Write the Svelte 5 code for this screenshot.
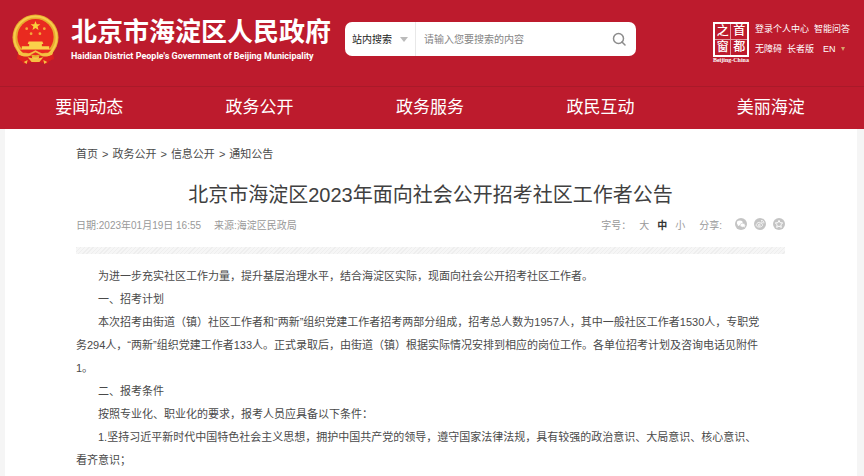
<script lang="ts">
  const nav = ['要闻动态', '政务公开', '政务服务', '政民互动', '美丽海淀'];
  const crumbs = ['首页', '政务公开', '信息公开', '通知公告'];
  const sizes = ['大', '中', '小'];

  let size = $state('中');
  let keyword = $state('');
</script>

<div class="page" lang="zh-CN">
  <header>
    <div class="top">
      <a class="brand" href="/">
        <svg class="emblem" viewBox="0 0 48 52" aria-hidden="true">
          <path d="M7 34 L5 46 L10 48 L12 51 L20 49 L24 50 L28 49 L36 51 L38 48 L43 46 L41 34 Z" fill="#d81e1f" />
          <circle cx="24" cy="24" r="23.5" fill="#e9ab2e" />
          <circle cx="24" cy="24" r="21.5" fill="none" stroke="#f6cd4c" stroke-width="2" />
          <circle cx="24" cy="23.5" r="18.5" fill="#e92a20" />
          <path d="M24 7l1.3 3.4 3.7.1-2.9 2.3 1 3.5-3.1-2-3.1 2 1-3.5-2.9-2.3 3.7-.1z" fill="#f9cf3d" />
          <g fill="#f4a93a">
            <circle cx="15" cy="15" r="1.4" />
            <circle cx="33" cy="15" r="1.4" />
            <circle cx="19.5" cy="20" r="1.4" />
            <circle cx="28.5" cy="20" r="1.4" />
          </g>
          <path d="M17 28h14l1 2.500h-1.500V33H38v3.500H10V33h7.500v-2.500H16z" fill="#fad04a" />
          <path d="M8 36.500h32l-3 3H11z" fill="#e92a20" />
          <path d="M5 36c5 5 11 5 15 3l4-2 4 2c4 2 10 2 15-3l-2 6c-5 2-9 2-13-1l-4-2-4 2c-4 3-8 3-13 1z" fill="#f5c043" />
          <path d="M6 41c5 3 10 3 14 1l1 5-8 3-5-3zM42 41c-5 3-10 3-14 1l-1 5 8 3 5-3z" fill="#dc211f" />
          <path d="M16 44l8 2 8-2-4 5h-8zM12 49l4-2-1 4zM36 49l-4-2 1 4z" fill="#f5c043" />
        </svg>
        <span class="brand-text">
          <span class="brand-cn">北京市海淀区人民政府</span>
          <span class="brand-en">Haidian District People's Government of Beijing Municipality</span>
        </span>
      </a>

      <form class="search" onsubmit={(e) => e.preventDefault()}>
        <div class="scope">
          <select aria-label="搜索范围">
            <option>站内搜索</option>
          </select>
          <span class="caret"></span>
        </div>
        <input type="text" aria-label="搜索" placeholder="请输入您要搜索的内容" bind:value={keyword} />
        <button type="submit" aria-label="搜索">
          <svg viewBox="0 0 14 14" width="14" height="14" fill="none" stroke="#8c8c8c" stroke-width="1.5">
            <circle cx="6.5" cy="6.5" r="5" />
            <path d="M10 10l3 3" stroke-linecap="round" />
          </svg>
        </button>
      </form>

      <div class="tools">
        <a class="seal" href="/capital">
          <span class="seal-box">
            <span>之</span><span>首</span><span>窗</span><span>都</span>
          </span>
          <span class="seal-name">Beijing-China</span>
        </a>
        <div class="links">
          <div class="row">
            <a href="/login">登录个人中心</a>
            <a href="/ask">智能问答</a>
          </div>
          <div class="row">
            <a href="/access">无障碍</a>
            <a href="/elder">长者版</a>
            <a class="lang" href="/en">EN <i></i></a>
          </div>
        </div>
      </div>
    </div>

    <nav>
      {#each nav as item}
        <a href="/{item}">{item}</a>
      {/each}
    </nav>
  </header>

  <main>
    <div class="crumbs">
      {#each crumbs as crumb, i}
        {#if i > 0}<span>&gt;</span>{/if}
        <a href="/{crumb}">{crumb}</a>
      {/each}
    </div>

    <h1>北京市海淀区2023年面向社会公开招考社区工作者公告</h1>

    <div class="meta">
      <span>日期:2023年01月19日 16:55</span>
      <span class="source">来源:海淀区民政局</span>
      <span class="label">字号：</span>
      <span class="sizes">
        {#each sizes as s}
          <button type="button" class:active={s === size} onclick={() => (size = s)}>{s}</button>
        {/each}
      </span>
      <span>分享:</span>
      <span class="share">
        <a href="/share/wechat" aria-label="微信">
          <svg viewBox="0 0 12 12" width="12" height="12">
            <circle cx="6" cy="6" r="6" fill="#c4c4c4" />
            <ellipse cx="4.8" cy="4.9" rx="2.9" ry="2.3" fill="#fff" />
            <path d="M3 6.5l-.3 1.7 1.7-1z" fill="#fff" />
            <ellipse cx="7.7" cy="7.2" rx="2.5" ry="2" fill="#fff" stroke="#c4c4c4" stroke-width=".5" />
            <path d="M8.5 8.8l1.3.8-.2-1.5z" fill="#fff" />
          </svg>
        </a>
        <a href="/share/weibo" aria-label="微博">
          <svg viewBox="0 0 12 12" width="12" height="12" fill="none" stroke="#fff">
            <circle cx="6" cy="6" r="6" fill="#c4c4c4" stroke="none" />
            <path d="M5.2 4.2C3.5 4.5 2 6 2.2 7.4c.4 2.2 5.5 2.2 6.400 0 .3-.9-.3-1.400-1-1.500.3-1-.6-1.200-1.700-.7 0-.6-.1-1-.7-1z" stroke-width=".8" />
            <circle cx="5.2" cy="7.2" r="1" stroke-width=".8" />
            <path d="M7 2.500c1.800-.3 3.200 1 2.800 2.900M7.100 3.900c.9-.1 1.500.5 1.300 1.300" stroke-width=".8" />
          </svg>
        </a>
        <a href="/share/qzone" aria-label="QQ空间">
          <svg viewBox="0 0 12 12" width="12" height="12">
            <circle cx="6" cy="6" r="6" fill="#c4c4c4" />
            <path d="M6 2.300l1.100 2.400 2.600.3-1.900 1.800.5 2.600L6 8.100 3.700 9.400l.5-2.600L2.300 5l2.600-.3z" fill="none" stroke="#fff" stroke-width="1" stroke-linejoin="round" />
          </svg>
        </a>
      </span>
    </div>

    <div class="stripe"></div>

    <article>
      <p>为进一步充实社区工作力量，提升基层治理水平，结合海淀区实际，现面向社会公开招考社区工作者。</p>
      <p>一、招考计划</p>
      <p>
        本次招考由街道（镇）社区工作者和“两新”组织党建工作者招考两部分组成，招考总人数为1957人，其中一般社区工作者1530人，专职党<br
        />务294人，“两新”组织党建工作者133人。正式录取后，由街道（镇）根据实际情况安排到相应的岗位工作。各单位招考计划及咨询电话见附件<br
        />1。
      </p>
      <p>二、报考条件</p>
      <p>按照专业化、职业化的要求，报考人员应具备以下条件：</p>
      <p>
        1.坚持习近平新时代中国特色社会主义思想，拥护中国共产党的领导，遵守国家法律法规，具有较强的政治意识、大局意识、核心意识、<br
        />看齐意识；
      </p>
    </article>
  </main>
</div>

<style>
  :global(body) {
    background: #f5f5f5;
  }

  .page {
    font-family: 'Liberation Sans', 'Noto Sans CJK SC', sans-serif;
    font-size: 11px;
    color: #4a4a4a;
  }

  a {
    color: inherit;
    text-decoration: none;
  }

  header {
    background: #bd1b2d;
    color: #fff;
  }

  .top {
    display: flex;
    align-items: flex-start;
    height: 86px;
    padding: 0 14px 0 12px;
    box-sizing: border-box;
  }

  .brand {
    display: flex;
    gap: 12px;
    margin-top: 14px;
  }

  .emblem {
    width: 47px;
    height: 51px;
  }

  .brand-text {
    display: flex;
    flex-direction: column;
    width: 264px;
    white-space: nowrap;
  }

  .brand-cn {
    font-size: 26px;
    line-height: 36px;
    font-weight: bold;
  }

  .brand-en {
    font-family: Roboto, sans-serif;
    font-size: 9px;
    line-height: 12px;
    font-weight: bold;
  }

  .search {
    display: flex;
    flex: 0 1 291px;
    height: 34px;
    margin: 22px 0 0 10px;
    background: #fff;
    border-radius: 7px;
    overflow: hidden;
  }

  .scope {
    display: flex;
    align-items: center;
    width: 71px;
    padding-left: 7px;
    box-sizing: border-box;
    border-right: 1px solid #e8e8e8;
  }

  select {
    appearance: none;
    width: 48px;
    padding: 0;
    border: 0;
    background: none;
    font: 10px 'Liberation Sans', 'Noto Sans CJK SC', sans-serif;
    color: #222;
  }

  .caret {
    border: 4px solid transparent;
    border-top: 5px solid #bbb;
    border-bottom: 0;
  }

  .search input {
    flex: 1;
    min-width: 0;
    padding: 0 8px;
    border: 0;
    outline: 0;
    background: none;
    font: 10px 'Liberation Sans', 'Noto Sans CJK SC', sans-serif;
  }

  .search input::placeholder {
    color: #858585;
  }

  .search button {
    display: flex;
    align-items: center;
    padding: 0 10px;
    border: 0;
    background: none;
  }

  .tools {
    display: flex;
    gap: 6px;
    margin: 22px 0 0 auto;
  }

  .seal {
    display: flex;
    flex-direction: column;
    align-items: center;
    font-family: 'Liberation Serif', 'Noto Sans CJK SC', serif;
  }

  .seal-box {
    display: grid;
    grid-template-columns: 1fr 1fr;
    gap: 1px;
    width: 36px;
    height: 35px;
    box-sizing: border-box;
    border: 2px solid #fff;
    background: #e59aa2;
  }

  .seal-box span {
    background: #bd1b2d;
    font-size: 12px;
    line-height: 15px;
    font-weight: 500;
    text-align: center;
  }

  .seal-name {
    font-size: 6px;
    line-height: 7px;
    font-weight: bold;
  }

  .links {
    font-size: 9px;
    line-height: 14px;
    white-space: nowrap;
  }

  .row {
    display: flex;
    gap: 5px;
    margin-bottom: 6px;
  }

  .lang {
    display: flex;
    align-items: center;
    gap: 5px;
    margin-left: 4px;
  }

  .lang i {
    border: 2px solid transparent;
    border-top: 4px solid #d7a268;
    border-bottom: 0;
  }

  nav {
    display: grid;
    grid-template-columns: repeat(5, 1fr);
    padding: 0 8px 0 4px;
    border-top: 1px solid #a91a29;
  }

  nav a {
    font-size: 17px;
    line-height: 42px;
    text-align: center;
  }

  main {
    margin: 0 7px 0 5px;
    padding: 16px 72px 6px 71px;
    background: #fff;
  }

  .crumbs {
    display: flex;
    gap: 4px;
    line-height: 18px;
  }

  h1 {
    margin: 17px 0 6px;
    font-size: 20px;
    line-height: 30px;
    font-weight: normal;
    text-align: center;
    color: #404040;
  }

  .meta {
    display: flex;
    align-items: center;
    height: 16px;
    font-size: 10px;
    color: #999;
  }

  .source {
    margin-left: 13px;
  }

  .label {
    margin-left: auto;
  }

  .sizes {
    display: flex;
    gap: 8px;
    margin: 0 14px 0 8px;
  }

  .sizes button {
    padding: 0;
    border: 0;
    background: none;
    font: inherit;
    color: #999;
  }

  .sizes button.active {
    font-weight: bold;
    color: #333;
  }

  .share {
    display: flex;
    gap: 7px;
    margin-left: 13px;
  }

  .share svg {
    display: block;
  }

  .stripe {
    height: 7px;
    margin-top: 15px;
    background: repeating-linear-gradient(135deg, #eee 0 1px, #f6f6f6 1px 3px);
  }

  article {
    margin-top: 11px;
    line-height: 23px;
  }

  p {
    margin: 0;
    text-indent: 2em;
  }
</style>
